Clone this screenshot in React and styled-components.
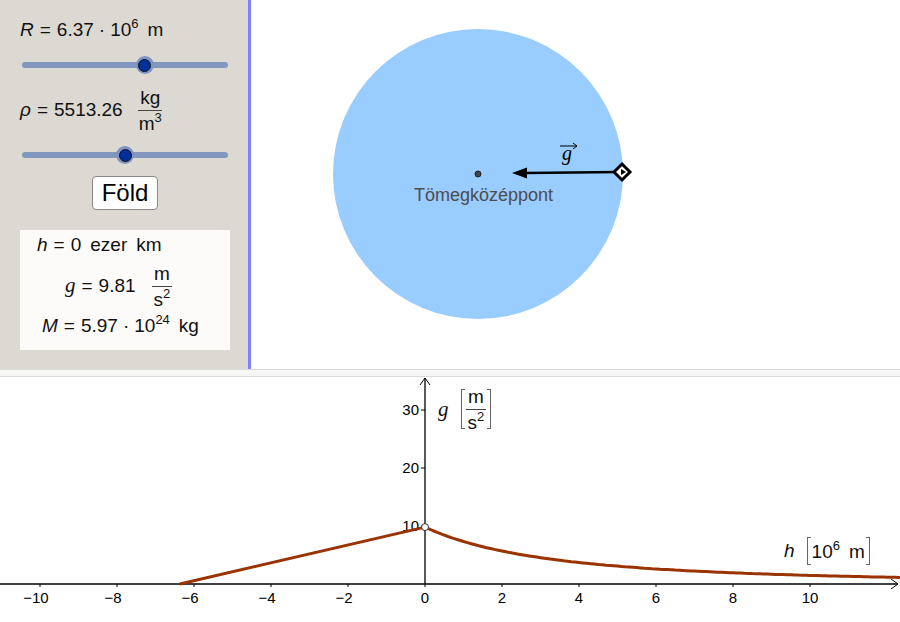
import React from 'react';
import styled, { createGlobalStyle } from 'styled-components';

const GlobalStyle = createGlobalStyle`
  html, body { margin: 0; padding: 0; background: #fff; }
  body { font-family: "Liberation Sans", Arial, sans-serif; color: #111; }
`;

const Page = styled.div`
  width: 900px;
  height: 622px;
  display: flex;
  flex-direction: column;
  overflow: hidden;
`;

const TopRow = styled.div`
  display: flex;
  height: 369px;
  flex-shrink: 0;
`;

const Panel = styled.div`
  width: 248px;
  flex-shrink: 0;
  background: #dcd9d2;
  border-right: 3px solid #8080ff;
  display: flex;
  flex-direction: column;
`;

const Canvas = styled.div`
  flex: 1;
  position: relative;
  background: #fff;
`;

const Divider = styled.div`
  height: 8px;
  flex-shrink: 0;
  box-sizing: border-box;
  background: #f6f6f6;
  border-top: 1px solid #d9d9d9;
  border-bottom: 1px solid #d9d9d9;
`;

const GraphArea = styled.div`
  position: relative;
  flex: 1;
  background: #fff;
`;

const MathLine = styled.div`
  font-size: 19px;
  height: ${p => p.$h || 28}px;
  line-height: ${p => p.$h || 28}px;
  margin-top: ${p => p.$top || 0}px;
  padding-left: ${p => p.$left || 0}px;
  white-space: nowrap;
`;

const Var = styled.span`
  font-style: italic;
  font-family: ${p => (p.$serif ? '"Liberation Serif", serif' : 'inherit')};
  font-size: ${p => (p.$serif ? '21px' : 'inherit')};
`;

const Eq = styled.span`
  margin: 0 6px;
`;

const Dot = styled.span`
  margin: 0 5px;
`;

const Sup = styled.sup`
  font-size: 13px;
  vertical-align: 8px;
  line-height: 0;
`;

const Unit = styled.span`
  margin-left: 9px;
`;

const Fraction = styled.span`
  display: inline-flex;
  flex-direction: column;
  align-items: center;
  vertical-align: middle;
  margin-left: ${p => p.$gap || 12}px;
  line-height: 1;
  font-size: 19px;
`;

const Num = styled.span`
  padding: 0 2px 3px;
  border-bottom: 1px solid #444;
`;

const Den = styled.span`
  padding: 3px 2px 0;
`;

const SliderTrack = styled.div`
  position: relative;
  margin-top: ${p => p.$top}px;
  margin-left: 22px;
  width: 206px;
  height: 20px;
  &::before {
    content: '';
    position: absolute;
    left: 0;
    right: 0;
    top: 7px;
    height: 6px;
    border-radius: 3px;
    background: #8197bd;
  }
`;

const Knob = styled.div`
  position: absolute;
  top: 1px;
  width: 18px;
  height: 18px;
  margin-left: -9px;
  border-radius: 50%;
  background: #7c93c4;
  display: flex;
  align-items: center;
  justify-content: center;
  &::after {
    content: '';
    width: 11px;
    height: 11px;
    border-radius: 50%;
    background: #00309a;
    border: 1px solid #111;
  }
`;

const Slider = ({ value, top }) => (
  <SliderTrack $top={top}>
    <Knob style={{ left: `${value * 100}%` }} />
  </SliderTrack>
);

const ButtonRow = styled.div`
  display: flex;
  justify-content: center;
  margin-top: 11px;
  padding-left: 2px;
`;

const Button = styled.button`
  height: 34px;
  padding: 0 9px;
  background: #fff;
  border: 1px solid #888;
  border-radius: 4px;
  font-family: "Liberation Sans", Arial, sans-serif;
  font-size: 24px;
  color: #000;
`;

const InfoBox = styled.div`
  margin: 20px 0 0 20px;
  width: 210px;
  height: 120px;
  box-sizing: border-box;
  background: #fcfbfa;
  padding-top: 1px;
`;

const Label = styled.div`
  position: absolute;
  left: ${p => p.$x}px;
  top: ${p => p.$y}px;
  font-size: 19px;
  white-space: nowrap;
  display: flex;
  align-items: center;
`;

const Bracket = styled.span`
  display: inline-flex;
  align-items: center;
  padding: 0 4px;
  height: ${p => p.$h}px;
  margin-left: 12px;
  border: 1px solid #666;
  border-top-color: transparent;
  border-bottom-color: transparent;
  position: relative;
  &::before, &::after {
    content: '';
    position: absolute;
    top: -1px;
    bottom: -1px;
    width: 4px;
    border-top: 1px solid #666;
    border-bottom: 1px solid #666;
  }
  &::before { left: -1px; }
  &::after { right: -1px; }
`;

const BracketText = styled.span`
  display: inline;
  line-height: 1;
`;

const SmallFrac = styled(Fraction)`
  margin-left: 0;
  font-size: 19px;
`;

const R = 6.37;
const G0 = 9.81;
const ox = 425;
const oy = 207;
const sx = 38.5;
const sy = 5.8;
const px = h => ox + h * sx;
const py = g => oy - g * sy;

const curvePath = () => {
  let d = `M ${px(-R).toFixed(1)} ${py(0).toFixed(1)} L ${px(0)} ${py(G0).toFixed(1)}`;
  for (let h = 0; h <= 12.4; h += 0.1) {
    const g = G0 * (R / (R + h)) ** 2;
    d += ` L ${px(h).toFixed(1)} ${py(g).toFixed(1)}`;
  }
  return d;
};

const TopDrawing = () => (
  <svg width="649" height="369" viewBox="251 0 649 369">
    <circle cx="478" cy="174" r="145" fill="#99ccff" />
    <line x1="620" y1="172" x2="525" y2="173" stroke="#000" strokeWidth="2.5" />
    <polygon points="512,173 527,167.5 527,178.5" fill="#000" />
    <polygon points="622,164 630,172 622,180 614,172" fill="#fff" stroke="#000" strokeWidth="3" />
    <polygon points="626,172 621,169 621,175" fill="#000" />
    <circle cx="478" cy="174" r="3" fill="#444" stroke="#222" strokeWidth="1" />
    <text x="414" y="201" fontFamily="Liberation Sans, Arial, sans-serif" fontSize="18" fill="#4d4d4d">
      Tömegközéppont
    </text>
    <text x="562" y="160" fontFamily="Liberation Serif, serif" fontStyle="italic" fontSize="20" fill="#000">g</text>
    <line x1="560" y1="146" x2="577" y2="146" stroke="#000" strokeWidth="1" />
    <polyline points="573,143 577,146 573,149" fill="none" stroke="#000" strokeWidth="1" />
  </svg>
);

const GraphDrawing = () => {
  const xs = [-10, -8, -6, -4, -2, 0, 2, 4, 6, 8, 10];
  const ys = [10, 20, 30];
  return (
    <svg width="900" height="245" viewBox="0 0 900 245">
      <line x1="0" y1={oy} x2="898" y2={oy} stroke="#000" strokeWidth="1.3" />
      <polyline points={`891,${oy - 5} 898,${oy} 891,${oy + 5}`} fill="none" stroke="#000" strokeWidth="1" />
      <line x1={ox} y1="1" x2={ox} y2={oy} stroke="#000" strokeWidth="1.3" />
      <polyline points={`${ox - 5},8 ${ox},1 ${ox + 5},8`} fill="none" stroke="#000" strokeWidth="1" />
      {xs.map(v => (
        <g key={v}>
          <line x1={px(v)} y1={oy} x2={px(v)} y2={oy + 3} stroke="#000" strokeWidth="1" />
          <text
            x={px(v) + (v < 0 ? -4 : 0)}
            y={oy + 19}
            textAnchor="middle"
            fontFamily="Liberation Sans, Arial, sans-serif"
            fontSize="15"
            fill="#000"
          >
            {v < 0 ? `\u2212${-v}` : v}
          </text>
        </g>
      ))}
      {ys.map(v => (
        <g key={v}>
          <line x1={ox - 4} y1={py(v)} x2={ox} y2={py(v)} stroke="#000" strokeWidth="1" />
          <text x={ox - 6} y={py(v) + 5} textAnchor="end" fontFamily="Liberation Sans, Arial, sans-serif" fontSize="15" fill="#000">
            {v}
          </text>
        </g>
      ))}
      <path d={curvePath()} fill="none" stroke="#993300" strokeWidth="3" strokeLinejoin="round" />
      <circle cx={ox} cy={py(G0)} r="3.5" fill="#fff" stroke="#333" strokeWidth="1" />
    </svg>
  );
};

export default function App() {
  return (
    <Page>
      <GlobalStyle />
      <TopRow>
        <Panel>
          <MathLine $top={16} $left={20}>
            <Var>R</Var><Eq>=</Eq>6.37<Dot>·</Dot>10<Sup>6</Sup><Unit>m</Unit>
          </MathLine>
          <Slider value={0.597} top={11} />
          <MathLine $top={13} $h={44} $left={20}>
            <Var>ρ</Var><Eq>=</Eq>5513.26
            <Fraction $gap={14}>
              <Num>kg</Num>
              <Den>m<Sup>3</Sup></Den>
            </Fraction>
          </MathLine>
          <Slider value={0.5} top={13} />
          <ButtonRow>
            <Button>Föld</Button>
          </ButtonRow>
          <InfoBox>
            <MathLine $left={17} $h={28}>
              <Var>h</Var><Eq>=</Eq>0<Unit>ezer</Unit><Unit>km</Unit>
            </MathLine>
            <MathLine $left={45} $h={52}>
              <Var $serif>g</Var><Eq>=</Eq>9.81
              <Fraction $gap={16}>
                <Num>m</Num>
                <Den>s<Sup>2</Sup></Den>
              </Fraction>
            </MathLine>
            <MathLine $left={22} $h={30}>
              <Var>M</Var><Eq>=</Eq>5.97<Dot>·</Dot>10<Sup>24</Sup><Unit>kg</Unit>
            </MathLine>
          </InfoBox>
        </Panel>
        <Canvas>
          <TopDrawing />
        </Canvas>
      </TopRow>
      <Divider />
      <GraphArea>
        <GraphDrawing />
        <Label $x={438} $y={12}>
          <Var $serif>g</Var>
          <Bracket $h={38}>
            <SmallFrac>
              <Num>m</Num>
              <Den>s<Sup>2</Sup></Den>
            </SmallFrac>
          </Bracket>
        </Label>
        <Label $x={784} $y={160}>
          <Var>h</Var>
          <Bracket $h={26}>
            <BracketText>10<Sup>6</Sup><Unit>m</Unit></BracketText>
          </Bracket>
        </Label>
      </GraphArea>
    </Page>
  );
}
